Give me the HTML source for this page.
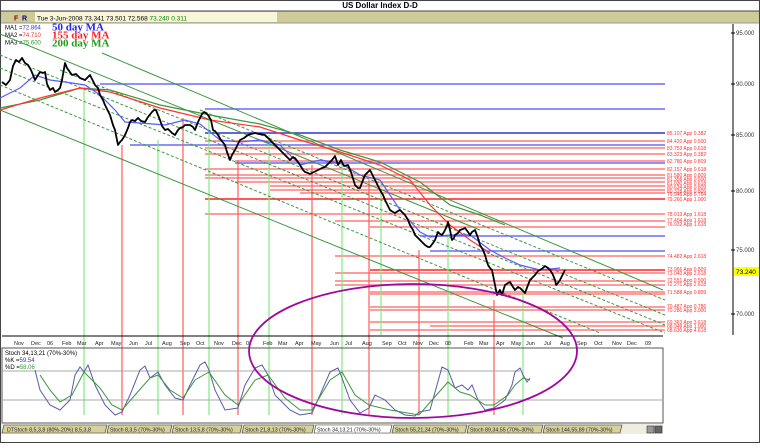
<!DOCTYPE html>
<html><head><meta charset="utf-8"><style>
body{margin:0;width:760px;height:443px;overflow:hidden;background:#fff;font-family:"Liberation Sans",sans-serif}
</style></head><body>
<svg width="760" height="443" viewBox="0 0 760 443" xmlns="http://www.w3.org/2000/svg" font-family="Liberation Sans, sans-serif">
<rect x="0" y="0" width="760" height="443" fill="#fff"/>
<rect x="0.5" y="0.5" width="759" height="442" fill="none" stroke="#444"/>
<text x="380" y="8" font-size="8" font-weight="bold" text-anchor="middle">US Dollar Index  D-D</text>
<rect x="1" y="11" width="758" height="12" fill="#cfcb98"/>
<line x1="1" y1="11" x2="759" y2="11" stroke="#444"/>
<line x1="1" y1="23" x2="759" y2="23" stroke="#999"/>
<rect x="35" y="12" width="242" height="10" fill="#f8f6d8"/>
<text x="14" y="20.5" font-size="7" fill="#800" font-weight="bold">F</text><text x="22" y="20.5" font-size="7" fill="#008" font-weight="bold">R</text>
<text x="37" y="20.5" font-size="6.5">Tue 3-Jun-2008   73.341   73.501   72.568   <tspan fill="#080">73.240   0.311</tspan></text>
<text x="5" y="29.5" font-size="6">MA1 =<tspan fill="#33c">72.864</tspan></text>
<text x="5" y="37" font-size="6">MA2 =<tspan fill="#e33">74.710</tspan></text>
<text x="5" y="44.5" font-size="6">MA3 =<tspan fill="#393">75.600</tspan></text>
<g font-family="Liberation Serif, serif" font-weight="bold" font-size="11">
<text x="52" y="30.5" fill="#22f">50 day MA</text><text x="52" y="38.5" fill="#f22">155 day MA</text><text x="52" y="46.5" fill="#292">200 day MA</text></g>
<line x1="733" y1="24" x2="733" y2="335" stroke="#000"/>
<g font-size="6" fill="#333">
<text x="736" y="35">95.000</text><text x="736" y="86">90.000</text><text x="736" y="137">85.000</text><text x="736" y="193">80.000</text><text x="736" y="252">75.000</text><text x="736" y="316">70.000</text></g>
<g stroke="#000"><line x1="731" y1="33" x2="735" y2="33"/><line x1="731" y1="84" x2="735" y2="84"/><line x1="731" y1="135" x2="735" y2="135"/><line x1="731" y1="191" x2="735" y2="191"/><line x1="731" y1="250" x2="735" y2="250"/><line x1="731" y1="314" x2="735" y2="314"/></g>
<rect x="734" y="267" width="25" height="9" fill="#ff0"/><text x="736" y="274" font-size="6.5">73.240</text>
<g stroke="#6a6aff" stroke-width="1.6">
<line x1="100" y1="84" x2="665" y2="84"/><line x1="205" y1="109" x2="665" y2="109"/><line x1="130" y1="145" x2="665" y2="145"/><line x1="235" y1="163" x2="665" y2="163"/>
<line x1="420" y1="236" x2="665" y2="236"/><line x1="430" y1="251" x2="665" y2="251"/><line x1="205" y1="133" x2="665" y2="133" stroke="#3333cc"/></g>
<g stroke="#ff7a7a" stroke-width="1.4">
<line x1="205" y1="141" x2="665" y2="141"/><line x1="205" y1="148" x2="665" y2="148"/><line x1="205" y1="154" x2="665" y2="154"/><line x1="235" y1="161" x2="665" y2="161"/>
<line x1="205" y1="169" x2="665" y2="169"/><line x1="205" y1="175" x2="665" y2="175"/><line x1="205" y1="178" x2="665" y2="178"/><line x1="235" y1="182" x2="665" y2="182"/>
<line x1="270" y1="186" x2="665" y2="186"/><line x1="270" y1="190" x2="665" y2="190"/><line x1="300" y1="193" x2="665" y2="193"/><line x1="205" y1="199" x2="665" y2="199" stroke="#f22" stroke-width="1.6"/>
<line x1="205" y1="214" x2="665" y2="214"/><line x1="335" y1="221" x2="665" y2="221"/><line x1="370" y1="227" x2="665" y2="227"/>
<line x1="335" y1="256" x2="665" y2="256"/><line x1="370" y1="270" x2="665" y2="270" stroke="#f22" stroke-width="1.6"/><line x1="335" y1="273" x2="665" y2="273"/>
<line x1="335" y1="281" x2="665" y2="281"/><line x1="335" y1="285" x2="665" y2="285"/><line x1="370" y1="292" x2="665" y2="292"/><line x1="370" y1="294" x2="665" y2="294"/>
<line x1="370" y1="307" x2="665" y2="307"/><line x1="370" y1="310" x2="665" y2="310"/><line x1="370" y1="322" x2="665" y2="322"/><line x1="430" y1="326" x2="665" y2="326"/><line x1="370" y1="330" x2="665" y2="330"/>
</g>
<g font-size="5" fill="#f33">
<text x="667" y="135">85.107 App 0.382</text><text x="667" y="143">84.420 App 0.500</text><text x="667" y="150">83.753 App 0.618</text><text x="667" y="156">83.323 App 0.382</text><text x="667" y="163">82.780 App 0.809</text><text x="667" y="171">82.157 App 0.618</text>
<text x="667" y="177">81.580 App 0.809</text><text x="667" y="181">81.358 App 0.500</text><text x="667" y="185">81.030 App 0.618</text><text x="667" y="189">80.634 App 0.809</text><text x="667" y="193">80.328 App 0.809</text><text x="667" y="196">79.946 App 0.764</text>
<text x="667" y="201">79.260 App 1.000</text><text x="667" y="216">78.013 App 1.618</text><text x="667" y="222">77.404 App 1.618</text><text x="667" y="226">76.932 App 1.618</text>
<text x="667" y="258">74.482 App 2.618</text><text x="667" y="271">73.966 App 0.809</text><text x="667" y="275">73.040 App 2.618</text><text x="667" y="282">72.551 App 0.500</text><text x="667" y="286">72.271 App 2.618</text><text x="667" y="294">71.588 App 0.809</text>
<text x="667" y="308">70.487 App 0.786</text><text x="667" y="312">70.280 App 3.000</text><text x="667" y="324">69.363 App 3.618</text><text x="667" y="328">68.949 App 1.000</text><text x="667" y="332">68.630 App 4.618</text></g>
<g stroke="#7ee87e" stroke-width="1.2"><line x1="84" y1="90" x2="84" y2="415"/><line x1="158" y1="140" x2="158" y2="415"/><line x1="209" y1="118" x2="209" y2="415"/><line x1="269" y1="135" x2="269" y2="415"/><line x1="342" y1="165" x2="342" y2="415"/><line x1="381" y1="185" x2="381" y2="335"/><line x1="448" y1="235" x2="448" y2="415"/><line x1="523" y1="285" x2="523" y2="415"/></g>
<g stroke="#ff5a5a" stroke-width="1.2"><line x1="122" y1="145" x2="122" y2="415"/><line x1="183" y1="118" x2="183" y2="415"/><line x1="238" y1="160" x2="238" y2="415"/><line x1="312" y1="165" x2="312" y2="415"/><line x1="369" y1="180" x2="369" y2="415"/><line x1="419" y1="250" x2="419" y2="415"/><line x1="494" y1="300" x2="494" y2="415"/></g>
<g stroke="#3c963c" fill="none"><line x1="102" y1="53" x2="663" y2="290"/><line x1="0" y1="110" x2="563" y2="338"/><line x1="0" y1="34" x2="480" y2="230"/></g>
<g stroke="#3c963c" fill="none" stroke-dasharray="3,2">
<line x1="0" y1="55" x2="665" y2="325"/><line x1="0" y1="68" x2="665" y2="333"/><line x1="0" y1="85" x2="600" y2="333"/><line x1="60" y1="70" x2="665" y2="315"/><line x1="200" y1="110" x2="665" y2="300"/></g>
<polyline fill="none" stroke="#3c963c" stroke-width="1.2" points="0,108 40,100 80,88 110,90 160,105 210,115 260,124 300,135 340,150 380,162 420,182 450,205 480,215 505,225"/>
<polyline fill="none" stroke="#f33" stroke-width="1.2" points="0,110 40,98 80,88 110,92 160,108 210,120 260,127 300,140 340,152 380,165 410,180 430,205 450,225 470,240 490,253"/>
<polyline fill="none" stroke="#5a5aff" stroke-width="1.2" points="0,98 20,88 35,75 50,80 65,82 85,85 100,95 115,110 125,122 140,123 165,125 185,120 200,124 220,140 240,142 260,140 280,145 300,165 320,160 340,163 360,175 380,180 400,210 420,232 430,237 450,235 470,235 490,250 505,258 520,265 540,270 560,268"/>
<polyline fill="none" stroke="#000" stroke-width="1.8" stroke-linejoin="round" points="2,82 6,85 10,80 13,66 16,60 19,62 22,58 25,63 28,65 31,70 35,80 38,75 40,72 43,73 45,72 47,84 50,90 53,88 55,92 58,90 60,88 62,80 65,63 67,68 72,75 76,74 80,78 85,80 88,77 90,75 93,81 95,85 98,88 100,95 103,100 105,105 108,111 110,115 113,125 115,130 117,140 118,145 120,142 122,140 125,135 128,128 130,122 132,120 135,121 138,118 141,121 145,122 148,117 152,112 154,110 156,110 158,115 160,120 162,126 165,130 168,129 172,133 175,135 178,130 180,128 183,127 185,125 190,125 193,127 195,130 198,122 200,118 202,114 204,112 206,113 208,115 211,120 213,130 215,131 218,135 221,140 225,145 227,152 230,160 232,155 235,150 238,144 240,140 244,138 248,135 251,134 255,133 259,134 265,135 268,138 270,140 273,143 275,145 278,148 280,150 283,153 285,155 288,158 290,160 293,157 295,158 298,162 300,165 303,170 305,172 308,173 310,174 314,172 318,170 322,168 325,167 329,163 332,160 335,156 338,165 341,160 344,166 348,165 351,172 355,185 358,188 360,188 363,180 365,175 368,172 370,170 373,176 375,180 378,186 380,190 383,195 385,200 388,206 390,210 393,212 395,213 398,211 400,210 403,213 405,215 408,220 410,225 413,230 415,235 418,238 420,240 423,243 425,245 428,247 430,247 433,243 435,240 438,232 440,234 442,235 444,232 445,230 447,226 448,222 450,230 452,240 454,238 455,235 458,233 460,230 463,229 465,228 468,232 470,235 472,232 475,230 478,238 480,245 483,250 485,255 487,262 488,265 490,268 492,270 494,280 495,285 497,295 500,290 502,295 504,288 505,285 508,283 510,282 513,287 515,290 518,287 520,288 523,291 525,293 528,285 530,280 533,277 535,275 538,271 540,270 543,268 545,266 548,268 550,270 552,273 553,275 555,280 556,285 558,283 560,280 563,274 565,270"/>
<line x1="2" y1="336" x2="663" y2="336" stroke="#000"/>
<g font-size="5.5" fill="#222">
<text x="14" y="345">Nov</text><text x="31" y="345">Dec</text><text x="47" y="345">06</text><text x="62" y="345">Feb</text><text x="77" y="345">Mar</text><text x="95" y="345">Apr</text><text x="111" y="345">May</text><text x="129" y="345">Jun</text><text x="145" y="345">Jul</text><text x="162" y="345">Aug</text><text x="180" y="345">Sep</text><text x="196" y="345">Oct</text><text x="214" y="345">Nov</text><text x="232" y="345">Dec</text><text x="246" y="345">07</text><text x="263" y="345">Feb</text><text x="278" y="345">Mar</text><text x="295" y="345">Apr</text><text x="311" y="345">May</text><text x="330" y="345">Jun</text><text x="345" y="345">Jul</text><text x="362" y="345">Aug</text><text x="382" y="345">Sep</text><text x="398" y="345">Oct</text><text x="413" y="345">Nov</text><text x="429" y="345">Dec</text><text x="445" y="345">08</text><text x="464" y="345">Feb</text><text x="479" y="345">Mar</text><text x="496" y="345">Apr</text><text x="511" y="345">May</text><text x="526" y="345">Jun</text><text x="544" y="345">Jul</text><text x="560" y="345">Aug</text><text x="577" y="345">Sep</text><text x="594" y="345">Oct</text><text x="612" y="345">Nov</text><text x="627" y="345">Dec</text><text x="645" y="345">09</text></g>
<rect x="2" y="348" width="661" height="75" fill="none" stroke="#555"/>
<line x1="2" y1="371" x2="520" y2="371" stroke="#aaa"/><line x1="2" y1="400" x2="663" y2="400" stroke="#aaa"/>
<text x="5" y="355" font-size="6">Stoch 34,13,21 (70%-30%)</text>
<text x="5" y="362" font-size="6">%K =<tspan fill="#33a">59.54</tspan></text>
<text x="5" y="369" font-size="6">%D =<tspan fill="#393">58.06</tspan></text>
<polyline fill="none" stroke="#5a5aaa" points="35,370 40,390 50,405 60,410 70,400 75,375 80,367 84,372 88,365 95,385 105,405 115,415 122,412 130,395 140,370 145,366 150,378 158,372 165,385 175,398 183,400 190,385 200,365 205,362 209,370 215,390 225,410 238,408 245,385 255,368 262,365 268,375 275,395 290,410 300,415 312,413 320,395 330,372 338,368 342,378 350,400 360,413 369,408 375,395 385,400 395,410 405,415 415,416 419,412 430,410 437,385 442,367 448,370 455,388 462,385 468,390 472,385 478,400 485,410 494,408 505,400 512,385 515,372 520,368 523,375 527,382 530,378"/>
<polyline fill="none" stroke="#3c963c" points="40,375 50,390 60,402 72,395 84,372 100,388 112,405 122,410 135,395 150,378 158,375 170,390 183,398 195,380 209,372 225,395 238,405 255,380 268,375 285,398 300,410 312,410 330,380 342,372 355,395 369,405 390,410 419,415 432,400 448,382 460,392 470,395 485,405 494,405 508,395 515,385 523,378 530,380"/>
<ellipse cx="413" cy="351" rx="164" ry="67" fill="none" stroke="#a0079f" stroke-width="1.8"/>
<rect x="1" y="424" width="662" height="10" fill="#eeeee0"/>
<g font-size="5.5" stroke="#333" stroke-width="0.6">
<path d="M4,425 H107 L105,433 H2 Z" fill="#d6d29e"/><path d="M109,425 H172 L170,433 H107 Z" fill="#d6d29e"/><path d="M174,425 H242 L240,433 H172 Z" fill="#d6d29e"/><path d="M244,425 H314 L312,433 H242 Z" fill="#d6d29e"/>
<path d="M316,425 H392 L390,433 H314 Z" fill="#fff"/><path d="M394,425 H467 L465,433 H392 Z" fill="#d6d29e"/><path d="M469,425 H543 L541,433 H467 Z" fill="#d6d29e"/><path d="M545,425 H622 L620,433 H543 Z" fill="#d6d29e"/>
<rect x="647" y="426" width="7" height="7" fill="#999"/><rect x="655" y="426" width="7" height="7" fill="#666"/></g>
<g font-size="5.3" fill="#222">
<text x="7" y="431.5">DTStoch 8,5,3,8 (80%-20%) 8,5,3,8</text><text x="110" y="431.5">Stoch 8,3,5 (70%-30%)</text><text x="175" y="431.5">Stoch 13,5,8 (70%-30%)</text><text x="245" y="431.5">Stoch 21,8,13 (70%-30%)</text><text x="317" y="431.5">Stoch 34,13,21 (70%-30%)</text><text x="395" y="431.5">Stoch 55,21,34 (70%-30%)</text><text x="470" y="431.5">Stoch 89,34,55 (70%-30%)</text><text x="546" y="431.5">Stoch 144,55,89 (70%-30%)</text></g>
</svg>
</body></html>
